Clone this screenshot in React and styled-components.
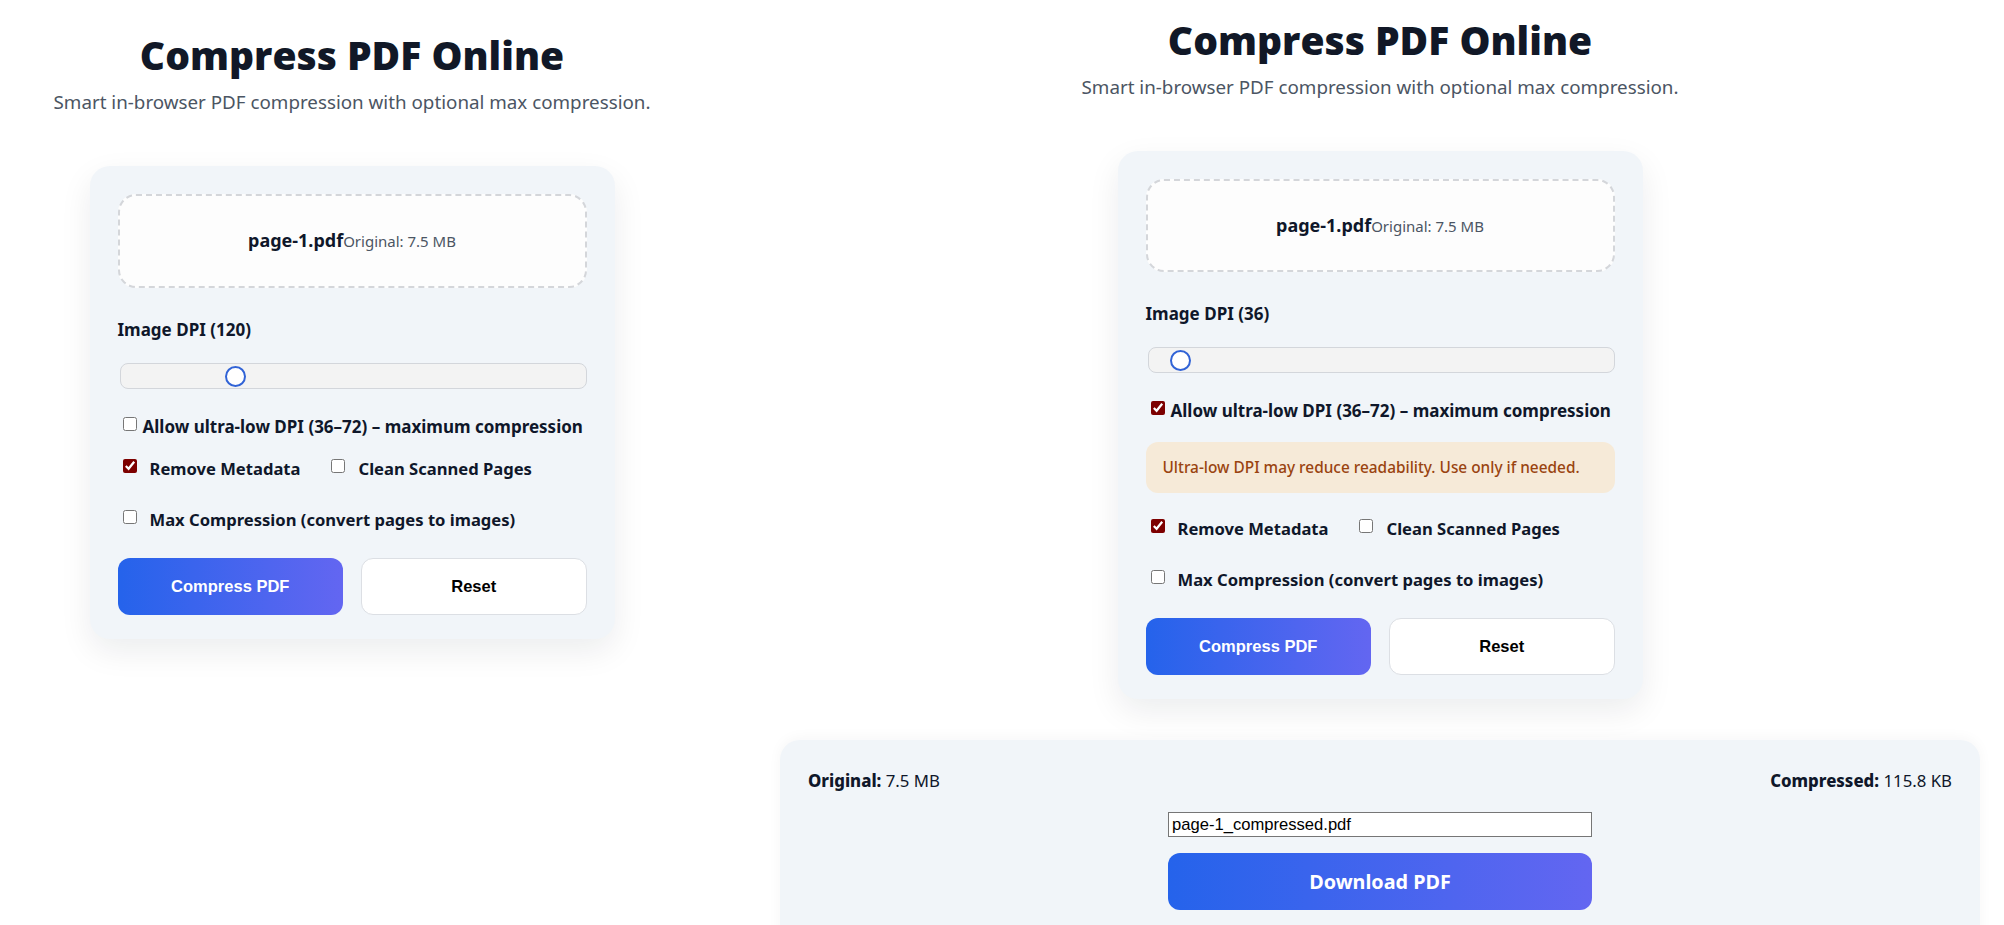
import React from "react";
import styled, { createGlobalStyle } from "styled-components";

const GlobalStyle = createGlobalStyle`
  html, body { margin: 0; padding: 0; background: #ffffff; }
  body { font-family: "Noto Sans", "Open Sans", sans-serif; color: #0f172a; }
  * { box-sizing: border-box; }
`;

const Page = styled.div`
  display: flex;
  align-items: flex-start;
  width: 2004px;
  height: 925px;
  overflow: hidden;
`;

const Column = styled.section`
  width: ${(p) => p.$width}px;
  margin-left: ${(p) => p.$offset || 0}px;
  padding-top: ${(p) => p.$top}px;
  display: flex;
  flex-direction: column;
  align-items: center;
  flex-shrink: 0;
`;

const Title = styled.h1`
  margin: 0;
  font-family: "Open Sans", "Noto Sans", sans-serif;
  font-size: 39px;
  line-height: 48px;
  font-weight: 800;
  color: #111827;
`;

const Subtitle = styled.p`
  margin: 10px 0 0;
  font-size: 18.8px;
  line-height: 26px;
  color: #4b5563;
`;

const Card = styled.div`
  margin-top: 51px;
  width: 525px;
  padding: 28px 28px 24px;
  background: #f1f5f9;
  border-radius: 20px;
  box-shadow: 0 12px 32px rgba(15, 23, 42, 0.08);
  display: flex;
  flex-direction: column;
`;

const DropZone = styled.div`
  height: ${(p) => p.$h}px;
  border: 2px dashed #d4d6da;
  border-radius: 18px;
  background: #fdfdfd;
  display: flex;
  align-items: baseline;
  justify-content: center;
  padding-top: ${(p) => p.$h / 2 - 15}px;
`;

const FileName = styled.span`
  font-size: 18px;
  font-weight: 700;
  color: #0f172a;
`;

const FileSize = styled.span`
  font-size: 15px;
  color: #4b5563;
`;

const FieldLabel = styled.div`
  margin-top: 30px;
  font-size: 17px;
  line-height: 24px;
  font-weight: 700;
  color: #0f172a;
`;

const Range = styled.input`
  -webkit-appearance: none;
  appearance: none;
  margin: ${(p) => p.$mt}px 0 0 2px;
  width: calc(100% - 2px);
  height: 26px;
  padding: 0;
  background: #f3f3f3;
  border: 1px solid #d3d6db;
  border-radius: 8px;
  outline: none;
  &::-webkit-slider-runnable-track {
    height: 24px;
    background: transparent;
  }
  &::-webkit-slider-thumb {
    -webkit-appearance: none;
    appearance: none;
    width: 21px;
    height: 21px;
    margin-top: 1.5px;
    border-radius: 50%;
    background: #ffffff;
    border: 2px solid #3163d6;
  }
`;

const CheckLine = styled.label`
  margin-top: ${(p) => p.$mt}px;
  height: 20px;
  display: flex;
  align-items: center;
  gap: ${(p) => p.$gap}px;
  font-size: ${(p) => p.$fs || 16.6}px;
  font-weight: 700;
  color: #0f172a;
  padding-left: 5px;
  white-space: nowrap;
`;

const Box = styled.input`
  width: 14px;
  height: 14px;
  margin: 0 0 4px;
  accent-color: #7d0000;
  flex-shrink: 0;
`;

const OptionsRow = styled.div`
  margin-top: 22px;
  display: flex;
  gap: 26px;
`;

const Warning = styled.div`
  margin: 22px 0 3px;
  height: 51px;
  padding: 0 17px;
  border-radius: 12px;
  background: #f6ead8;
  color: #9a4410;
  font-size: 15.4px;
  font-weight: 500;
  display: flex;
  align-items: center;
`;

const ButtonRow = styled.div`
  margin-top: 29px;
  display: grid;
  grid-template-columns: 1fr 1fr;
  gap: 18px;
`;

const Button = styled.button`
  height: 57px;
  border-radius: 12px;
  font-family: "Liberation Sans", Arial, sans-serif;
  font-size: 16.5px;
  font-weight: 700;
  cursor: pointer;
  border: ${(p) => (p.$primary ? "none" : "1px solid #dcdfe4")};
  color: ${(p) => (p.$primary ? "#ffffff" : "#000000")};
  background: ${(p) =>
    p.$primary ? "linear-gradient(90deg, #2563eb, #6366f1)" : "#ffffff"};
`;

const ResultPanel = styled.div`
  margin-top: 41px;
  width: 1200px;
  padding: 30px 28px 40px;
  background: #f1f5f9;
  border-radius: 20px 20px 0 0;
  box-shadow: 0 -2px 14px rgba(15, 23, 42, 0.04);
  display: flex;
  flex-direction: column;
  align-items: center;
`;

const StatsRow = styled.div`
  align-self: stretch;
  display: flex;
  justify-content: space-between;
  font-size: 16.8px;
  line-height: 22px;
  color: #0f172a;
`;

const StatLabel = styled.b`
  font-weight: 800;
`;

const FileInput = styled.input`
  margin-top: 20px;
  width: 424px;
  height: 25px;
  padding: 1px 3px;
  border: 1px solid #767676;
  font-family: "Liberation Sans", Arial, sans-serif;
  font-size: 16.6px;
  color: #000;
  background: #fff;
`;

const DownloadButton = styled.button`
  margin-top: 16px;
  width: 424px;
  height: 57px;
  border: none;
  border-radius: 12px;
  background: linear-gradient(90deg, #2563eb, #6366f1);
  color: #fff;
  font-family: "Noto Sans", sans-serif;
  font-size: 19.8px;
  font-weight: 700;
`;

function Tool({ dpi, ultra, dropH }) {
  return (
    <>
      <Title>Compress PDF Online</Title>
      <Subtitle>Smart in-browser PDF compression with optional max compression.</Subtitle>
      <Card>
        <DropZone $h={dropH}>
          <FileName>page-1.pdf</FileName>
          <FileSize>Original: 7.5 MB</FileSize>
        </DropZone>
        <FieldLabel>Image DPI ({dpi})</FieldLabel>
        <Range type="range" min={15} max={459} defaultValue={dpi} $mt={21} />
        <CheckLine $mt={27} $gap={6} $fs={17}>
          <Box type="checkbox" defaultChecked={ultra} />
          Allow ultra-low DPI (36–72) – maximum compression
        </CheckLine>
        {ultra && <Warning>Ultra-low DPI may reduce readability. Use only if needed.</Warning>}
        <OptionsRow>
          <CheckLine $mt={0} $gap={13}>
            <Box type="checkbox" defaultChecked />
            Remove Metadata
          </CheckLine>
          <CheckLine $mt={0} $gap={13}>
            <Box type="checkbox" />
            Clean Scanned Pages
          </CheckLine>
        </OptionsRow>
        <CheckLine $mt={31} $gap={13}>
          <Box type="checkbox" />
          Max Compression (convert pages to images)
        </CheckLine>
        <ButtonRow>
          <Button $primary>Compress PDF</Button>
          <Button>Reset</Button>
        </ButtonRow>
      </Card>
    </>
  );
}

export default function App() {
  return (
    <>
      <GlobalStyle />
      <Page>
        <Column $width={704} $top={31}>
          <Tool dpi={120} ultra={false} dropH={94} />
        </Column>
        <Column $width={1200} $offset={76} $top={16}>
          <Tool dpi={36} ultra dropH={93} />
          <ResultPanel>
            <StatsRow>
              <span>
                <StatLabel>Original:</StatLabel> 7.5 MB
              </span>
              <span>
                <StatLabel>Compressed:</StatLabel> 115.8 KB
              </span>
            </StatsRow>
            <FileInput defaultValue="page-1_compressed.pdf" />
            <DownloadButton>Download PDF</DownloadButton>
          </ResultPanel>
        </Column>
      </Page>
    </>
  );
}
